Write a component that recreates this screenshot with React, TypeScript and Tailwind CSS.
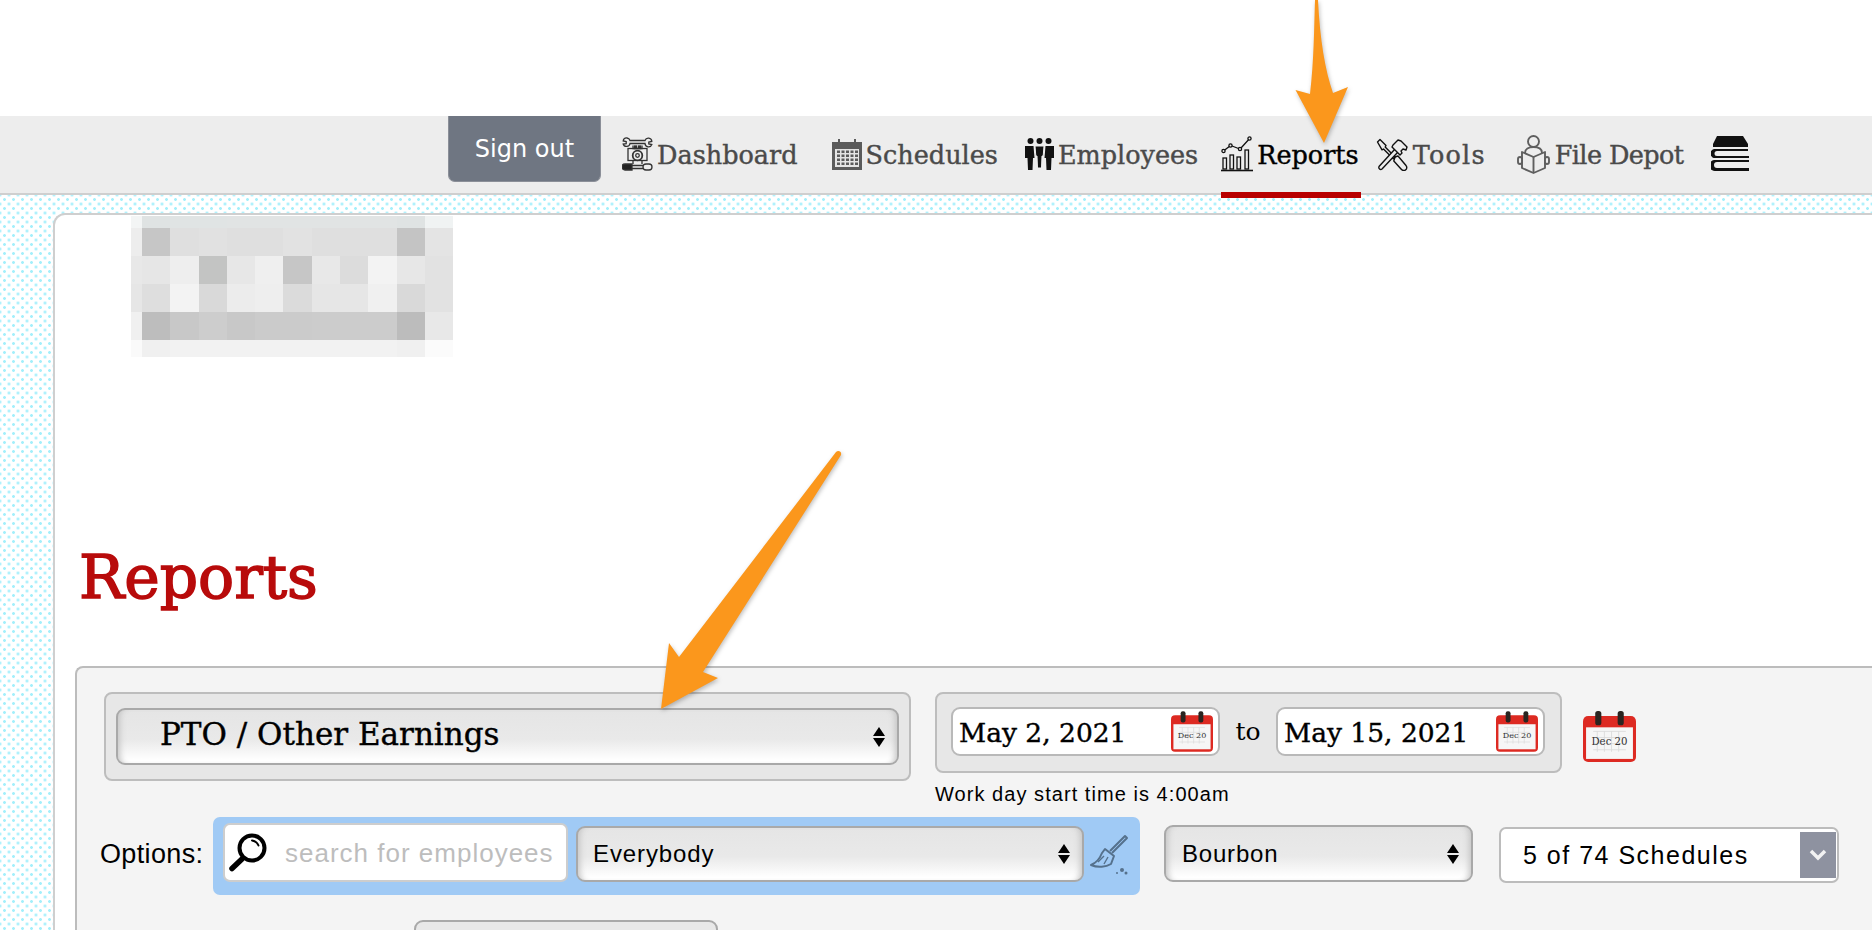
import type { ReactNode } from "react";

const slab = "font-['DejaVu_Serif',serif]";
const sans = "font-['Liberation_Sans',Arial,sans-serif]";

const glossy =
  "bg-[linear-gradient(#e5e5e5_0%,#e9e9e9_55%,#ffffff_95%)] border-2 border-[#a9a9a9] rounded-[9px] shadow-[inset_7px_0_6px_-5px_#c4c4c4,inset_-7px_0_6px_-5px_#c4c4c4]";

const logoRows = [
  ["#f3f5f5", "#dfe3e3", "#e0e4e4", "#e0e4e4", "#e1e4e4", "#e1e4e4", "#e1e4e4", "#e1e4e4", "#e1e4e4", "#e1e4e4", "#dfe3e3", "#f0f3f3"],
  ["#ededed", "#c6c6c6", "#dfdfdf", "#e1e1e1", "#dfdfdf", "#dfdfdf", "#e2e2e2", "#dfdfdf", "#dfdfdf", "#dfdfdf", "#c4c4c4", "#e4e4e4"],
  ["#e8e8e8", "#e6e6e6", "#eeeeee", "#c3c4c3", "#e7e7e7", "#efefef", "#c6c6c6", "#e8e8e8", "#dcdcdc", "#f3f3f3", "#e7e7e7", "#e2e2e2"],
  ["#e6e6e6", "#dedede", "#f3f3f3", "#d9d9d9", "#ececec", "#eeeeee", "#dbdbdb", "#e6e6e6", "#e6e6e6", "#f0f0f0", "#d9d9d9", "#e2e2e2"],
  ["#f0f0f0", "#bdbdbd", "#c8c8c8", "#cdcdcd", "#c8c8c8", "#cbcbcb", "#cbcbcb", "#cccccc", "#cccccc", "#cccccc", "#bcbcbc", "#e8e8e8"],
  ["#fafafa", "#f0f0f0", "#f2f2f2", "#f2f2f2", "#f2f2f2", "#f2f2f2", "#f2f2f2", "#f2f2f2", "#f2f2f2", "#f2f2f2", "#f0f0f0", "#fbfbfb"],
];

function DashboardIcon() {
  return (
    <svg width="31" height="34" viewBox="0 0 31 34" fill="none" stroke="#333" strokeWidth="1.300">
      <path d="M5 1a3.500 3.500 0 0 0-3.800 3l3 .6v2l-3 .4A3.500 3.500 0 0 0 8 6.500h15a3.500 3.500 0 0 0 6.800 1l-3-.5v-2l3-.6A3.500 3.500 0 0 0 23 3.500H8A3.500 3.500 0 0 0 5 1z" />
      <path d="M11 8.500v3h9v-3" />
      <rect x="12.500" y="9" width="2" height="2.500" fill="#333" />
      <rect x="16.500" y="9" width="2" height="2.500" fill="#333" />
      <rect x="6" y="11.500" width="19" height="12" />
      <circle cx="15.500" cy="18.500" r="4.800" fill="#ededed" strokeWidth="1.800" />
      <circle cx="15.500" cy="18.500" r="1.800" />
      <path d="M11 23.500v3.500M20 23.500v3.500" />
      <path d="M3 27h7v6H3a3 3 0 0 1 0-6z" fill="#222" />
      <path d="M10 28.500h11M10 31.500h11" />
      <rect x="21" y="27" width="9" height="6" rx="3" />
    </svg>
  );
}

function SchedulesIcon() {
  return (
    <svg width="30" height="31" viewBox="0 0 30 31">
      <path d="M0 3h6v3h2V3h14v3h2V3h6v28H0z" fill="#5b5b5b" />
      <rect x="6" y="0" width="2" height="6" fill="#5b5b5b" />
      <rect x="22" y="0" width="2" height="6" fill="#5b5b5b" />
      <rect x="3" y="10" width="24" height="18" fill="#e4e4e4" />
      {[11.500, 15.500, 19.500, 23.500].map((y) =>
        [5, 9.500, 14, 18.500, 23].map((x) => (
          <rect key={`${x}-${y}`} x={x} y={y} width="3" height="2.500" fill="#5b5b5b" />
        )),
      )}
    </svg>
  );
}

function EmployeesIcon() {
  return (
    <svg width="29" height="32" viewBox="0 0 29 32" fill="#111">
      <circle cx="5.500" cy="3" r="3" />
      <circle cx="14.500" cy="3" r="3" />
      <circle cx="23.500" cy="3" r="3" />
      <path d="M0 8h8.500l1 12H8l-.5 12H3L2.500 20H0z" />
      <path d="M20.500 8H29v12h-2.500l-.5 12h-4.500L21 20h-1.500z" />
      <path d="M10 8h9l-.8 10H17l-.5 12h-4L12 18h-1.200z" stroke="#ededed" strokeWidth="1" />
    </svg>
  );
}

function ReportsIcon() {
  return (
    <svg width="32" height="36" viewBox="0 0 32 36" fill="none" stroke="#111" strokeWidth="1.300">
      <circle cx="2.500" cy="15" r="1.600" />
      <circle cx="9.500" cy="9.500" r="1.600" />
      <circle cx="19" cy="13" r="1.600" />
      <circle cx="28.500" cy="2.500" r="1.600" />
      <path d="M3.700 14l4.600-3.600M11 10l6.500 2.500M20 12l7.500-8.300" />
      <rect x="2" y="22" width="3.500" height="11" />
      <rect x="9" y="19" width="3.500" height="14" />
      <rect x="16" y="21" width="3.500" height="12" />
      <rect x="24" y="14" width="3.500" height="19" />
      <path d="M0 34.500h32" strokeWidth="1.600" />
    </svg>
  );
}

function ToolsIcon() {
  return (
    <svg width="33" height="33" viewBox="0 0 33 33" fill="none" stroke="#111" strokeWidth="1.400" strokeLinejoin="round">
      <path d="M1.500 4L4 1.500l6 6-.8 1.500L19 19l-1.800 1.800L7.500 11 6 11.800z" />
      <path d="M19 19l3-1 8 9.500a3 3 0 0 1-4.500 4L17.800 23z" />
      <path d="M3 28.500L19 11l3 3L6 31a2 2 0 0 1-3-2.500z" fill="#ededed" />
      <path d="M17 7l5-5 3 1 6 6-1 3-3-1-2 2 1 2-2 2-8-8z" fill="#ededed" />
    </svg>
  );
}

function FileDepotIcon() {
  return (
    <svg width="35" height="39" viewBox="0 0 35 39" fill="none" stroke="#5f5f5f" strokeWidth="1.900" strokeLinejoin="round">
      <circle cx="17.500" cy="6.500" r="5.500" />
      <path d="M9 18c0-4 3.500-6 8.500-6s8.500 2 8.500 6" />
      <path d="M6 17l11.500 5L29 17v16l-11.500 5L6 33z" fill="#ededed" />
      <path d="M17.500 22v16" />
      <rect x="2" y="22" width="4" height="7" rx="2" fill="#ededed" />
      <rect x="29" y="22" width="4" height="7" rx="2" fill="#ededed" />
    </svg>
  );
}

function BooksIcon() {
  return (
    <svg width="39" height="36" viewBox="0 0 39 36" fill="#111">
      <path d="M6 0h26l5 8v3H2V8z" />
      <path d="M3 13h34v2H6a2.500 2.500 0 0 0 0 5h32v2H5a4.500 4.500 0 0 1-2-9z" />
      <path d="M3 24h35v2H6a2.500 2.500 0 0 0 0 6h32v3H5a5.500 5.500 0 0 1-2-11z" />
    </svg>
  );
}

function MagnifierIcon() {
  return (
    <svg width="40" height="39" viewBox="0 0 40 39" fill="none" stroke="#000">
      <circle cx="24" cy="15" r="12.500" strokeWidth="4" />
      <path d="M14 26L4 35.500" strokeWidth="5.500" strokeLinecap="round" />
      <path d="M24 7.500c3 .4 5.500 2.500 6.500 5" strokeWidth="2" strokeLinecap="round" />
    </svg>
  );
}

function BroomIcon() {
  return (
    <svg width="41" height="41" viewBox="0 0 41 41" fill="none" stroke="#55718c" strokeWidth="2" strokeLinejoin="round">
      <path d="M22 17L37 2l2 2-15 15" />
      <path d="M17 15l9 7-3 8c-5 3-13 4-20 1 5-2 9-7 11-12z" />
      <path d="M10 28l6-6M16 30l4-7" strokeWidth="1.400" />
      <circle cx="34" cy="36" r="2" fill="#55718c" stroke="none" />
      <circle cx="38" cy="39" r="1.500" fill="#55718c" stroke="none" />
      <circle cx="29" cy="39" r="1" fill="#55718c" stroke="none" />
    </svg>
  );
}

function CalendarIcon({ width, height }: { width: number; height: number }) {
  return (
    <svg width={width} height={height} viewBox="0 0 52 50">
      <rect x="0" y="5" width="52" height="45" rx="5" fill="#dd2a22" />
      <rect x="12" y="0" width="6" height="14" rx="2.500" fill="#2a2420" />
      <rect x="34" y="0" width="6" height="14" rx="2.500" fill="#2a2420" />
      <rect x="3" y="16" width="46" height="31" fill="#f6f6f6" />
      <path d="M10 20h32M10 26h32M10 32h32M10 38h32M14 20v20M21 20v20M28 20v20M35 20v20" stroke="#d9d9d9" strokeWidth="0.800" />
      <text x="26" y="33" textAnchor="middle" fontSize="10" fill="#333" fontFamily="DejaVu Serif, serif">
        Dec 20
      </text>
    </svg>
  );
}

function UpDown() {
  return (
    <span className="flex flex-col items-center gap-[2px]">
      <span className="w-0 h-0 border-x-[6px] border-x-transparent border-b-[9px] border-b-black" />
      <span className="w-0 h-0 border-x-[6px] border-x-transparent border-t-[9px] border-t-black" />
    </span>
  );
}

function NavItem({
  icon,
  label,
  className,
  labelClassName = "",
  active,
}: {
  icon: ReactNode;
  label?: string;
  className: string;
  labelClassName?: string;
  active?: boolean;
}) {
  return (
    <div
      className={`relative flex items-center gap-[4px] h-[76px] ${className} ${
        active ? "text-black" : "text-[#4a4a4a]"
      }`}
    >
      {icon}
      {label && (
        <span className={`${slab} text-[25.5px] leading-none translate-y-[2px] [-webkit-text-stroke:0.4px_currentColor] ${labelClassName}`}>
          {label}
        </span>
      )}
      {active && <span className="absolute left-0 -right-[2px] -bottom-[6px] h-[6px] bg-[#b80000]" />}
    </div>
  );
}

function DateField({ value }: { value: string }) {
  return (
    <div className="w-[269px] h-[49px] bg-white border-2 border-[#b9b9b9] rounded-[9px] flex items-center justify-between pl-[6px] pr-[5px]">
      <span className={`${slab} text-[26.5px] leading-none text-black translate-y-[2px] [-webkit-text-stroke:0.4px_#000]`}>{value}</span>
      <CalendarIcon width={42} height={41} />
    </div>
  );
}

export default function App() {
  return (
    <div className="relative w-[1872px] h-[930px] overflow-hidden bg-white">
      <div className="h-[116px] bg-white" />

      <nav className="relative z-10 h-[79px] bg-[#ededed] border-b-2 border-[#cfcfcf] flex items-start pl-[448px]">
        <div className="w-[153px] h-[66px] bg-[#6f7682] rounded-b-[7px] border-x border-b border-[#8b8f98] flex items-center justify-center text-white font-['DejaVu_Sans',sans-serif] text-[24px]">
          Sign out
        </div>
        <NavItem className="ml-[21px]" icon={<DashboardIcon />} label="Dashboard" />
        <NavItem className="ml-[34px]" icon={<SchedulesIcon />} label="Schedules" />
        <NavItem className="ml-[27px]" icon={<EmployeesIcon />} label="Employees" />
        <NavItem className="ml-[23px]" icon={<ReportsIcon />} label="Reports" active />
        <NavItem className="ml-[17px]" icon={<ToolsIcon />} label="Tools" labelClassName="tracking-[1.2px]" />
        <NavItem className="ml-[30px]" icon={<FileDepotIcon />} label="File Depot" labelClassName="tracking-[-0.6px]" />
        <NavItem className="ml-[28px]" icon={<BooksIcon />} />
      </nav>

      <div className="h-[735px] pl-[53px] pt-[18px] [background:radial-gradient(circle,#a4effb_1.1px,transparent_1.7px)_0_0/9px_9px,radial-gradient(circle,#a4effb_1.1px,transparent_1.7px)_4.5px_4.5px/9px_9px,#ffffff]">
        <main className="w-[1840px] h-[717px] bg-white border-l-2 border-t-2 border-[#cfcfcf] rounded-tl-[12px]">
          <div className="ml-[76px] mt-[1px] grid grid-cols-[11px_repeat(11,28.3px)] grid-rows-[12px_repeat(4,28px)_17px] w-fit">
            {logoRows.flat().map((color, i) => (
              <div key={i} style={{ backgroundColor: color }} />
            ))}
          </div>

          <h1 className={`${slab} ml-[24px] mt-[184px] h-[72px] text-[60px] leading-[72px] text-[#b80b0b] [-webkit-text-stroke:1.5px_#b80b0b]`}>
            Reports
          </h1>

          <section className="ml-[20px] mt-[53px] w-[1820px] h-[400px] bg-[#f4f4f4] border-l-2 border-t-2 border-[#bcbcbc] rounded-tl-[8px] pt-[24px]">
            <div className="flex items-start pl-[27px]">
              <div className="w-[807px] h-[89px] bg-[#e7e7e7] border-2 border-[#bdbdbd] rounded-[8px] px-[10px] pt-[14px]">
                <div className={`${glossy} h-[57px] flex items-center justify-between pl-[42px] pr-[12px]`}>
                  <span className={`${slab} text-[31px] leading-none text-black -translate-y-[2px] [-webkit-text-stroke:0.4px_#000]`}>
                    PTO / Other Earnings
                  </span>
                  <UpDown />
                </div>
              </div>

              <div className="ml-[24px]">
                <div className="w-[627px] h-[81px] bg-[#e7e7e7] border-2 border-[#bdbdbd] rounded-[8px] flex items-start pl-[14px] pt-[13px]">
                  <DateField value="May 2, 2021" />
                  <span className={`${slab} w-[56px] h-[49px] flex items-center justify-center text-[25px] text-black`}>to</span>
                  <DateField value="May 15, 2021" />
                </div>
                <p className={`${sans} mt-[10px] text-[20px] leading-[22px] tracking-[1.05px] text-black`}>
                  Work day start time is 4:00am
                </p>
              </div>

              <div className="ml-[21px] mt-[19px]">
                <CalendarIcon width={53} height={51} />
              </div>
            </div>

            <div className={`${sans} flex items-start pl-[23px] mt-[12px]`}>
              <span className="w-[113px] h-[74px] flex items-center text-[27px] tracking-[0.35px] text-black">Options:</span>

              <div className="w-[927px] h-[78px] bg-[#a0caf5] rounded-[7px] flex items-start pl-[10px] pt-[6px]">
                <div className="w-[345px] h-[59px] bg-white border-2 border-[#cdcdcd] rounded-[7px] flex items-center pl-[3px]">
                  <MagnifierIcon />
                  <span className="ml-[17px] text-[26px] leading-none tracking-[1px] text-[#bdbdbd] whitespace-nowrap">
                    search for employees
                  </span>
                </div>
                <div className={`${glossy} ml-[8px] mt-[3px] w-[508px] h-[56px] flex items-center justify-between pl-[15px] pr-[12px]`}>
                  <span className="text-[24px] leading-none tracking-[0.9px] text-black">Everybody</span>
                  <UpDown />
                </div>
                <div className="ml-[4px] mt-[11px]">
                  <BroomIcon />
                </div>
              </div>

              <div className={`${glossy} ml-[24px] mt-[8px] w-[309px] h-[57px] flex items-center justify-between pl-[16px] pr-[12px]`}>
                <span className="text-[24px] leading-none tracking-[0.8px] text-black">Bourbon</span>
                <UpDown />
              </div>

              <div className="ml-[26px] mt-[10px] w-[340px] h-[56px] bg-white border-2 border-[#bcbcbc] rounded-[7px] flex items-center justify-between pl-[22px] pr-[1px]">
                <span className="text-[25px] leading-none tracking-[1.5px] text-black">5 of 74 Schedules</span>
                <span className="w-[36px] h-[46px] bg-[#8e92a0] flex items-center justify-center">
                  <svg width="18" height="12" viewBox="0 0 18 12" fill="none" stroke="#f2f2f2" strokeWidth="3.500">
                    <path d="M2 2l7 7 7-7" />
                  </svg>
                </span>
              </div>
            </div>

            <div className="ml-[337px] mt-[25px] w-[304px] h-[50px] bg-[#e8e8e8] border-2 border-[#a9a9a9] rounded-[9px]" />
          </section>
        </main>
      </div>

      <svg className="absolute inset-0 z-20 pointer-events-none drop-shadow-[1px_2px_2px_rgba(0,0,0,0.25)]" width="1872" height="930" viewBox="0 0 1872 930">
        <path d="M1315 0h3c2 40 7 70 15 93l15-6-24 56-28.500-53 14.500 4c4-34 4-64 5-94z" fill="#fb971c" />
        <path d="M836 452c2-2 6-1 5 3L703 672l15 6-57 31 8-66 10 14z" fill="#fb971c" />
      </svg>
    </div>
  );
}
